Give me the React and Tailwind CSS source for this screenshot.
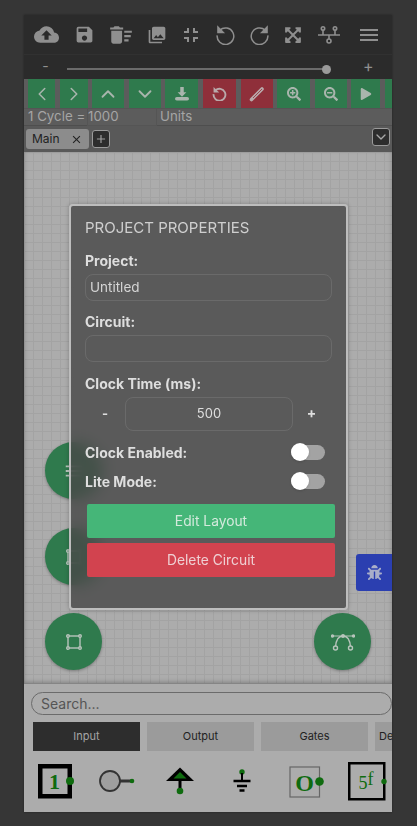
import React from "react";
import { MdCloudUpload, MdSave, MdDeleteSweep, MdPhotoLibrary, MdFullscreenExit, MdMenu, MdClose, MdAdd } from "react-icons/md";
import { FaSearchPlus, FaSearchMinus, FaPlay, FaBug, FaExpandArrowsAlt } from "react-icons/fa";
import { ChevronLeft, ChevronRight, ChevronUp, ChevronDown } from "lucide-react";

const font = { fontFamily: "Inter, 'Liberation Sans', sans-serif" };

function Undo({ flip, size = 21, strokeWidth = 1.700 }) {
  return (
    <svg width={size} height={size} viewBox="0 0 24 24" fill="none" stroke="currentColor" strokeWidth={strokeWidth} className={flip ? "-scale-x-100" : ""}>
      <path d="M5.500 7A9.500 9.500 0 1 1 2.500 13" />
      <path d="M2.500 1.500V10.500H11.500z" fill="currentColor" stroke="none" />
    </svg>
  );
}

function Network() {
  return (
    <svg width="22" height="18" viewBox="0 0 22 18" fill="none" stroke="#8f8f8f" strokeWidth="1.600">
      <path d="M0 9h22M5 3.500V9M17 3.500V9M11 9v4" />
      <circle cx="5" cy="2.500" r="1.700" />
      <circle cx="17" cy="2.500" r="1.700" />
      <circle cx="11" cy="15" r="2" />
    </svg>
  );
}

function Tray() {
  return (
    <svg width="14" height="14" viewBox="0 0 16 16" fill="#a9b5ad">
      <path d="M6 0h4v6h3l-5 5-5-5h3z" />
      <rect x="0" y="11.500" width="16" height="4" rx="2" />
    </svg>
  );
}

function Pencil() {
  return (
    <svg width="16" height="16" viewBox="0 0 16 16" fill="none">
      <path d="M2.500 13.500L13 3" stroke="#b9a9ab" strokeWidth="3.600" strokeLinecap="round" />
      <path d="M4 12L13 3" stroke="#8f2f3a" strokeWidth="0.800" />
    </svg>
  );
}

function Poly() {
  return (
    <svg width="16" height="16" viewBox="0 0 16 16" fill="none" stroke="#b8c4bc" strokeWidth="1.400">
      <rect x="2" y="2" width="12" height="12" />
      <circle cx="2" cy="2" r="1.300" fill="#2f7a4d" />
      <circle cx="14" cy="2" r="1.300" fill="#2f7a4d" />
      <circle cx="2" cy="14" r="1.300" fill="#2f7a4d" />
      <circle cx="14" cy="14" r="1.300" fill="#2f7a4d" />
    </svg>
  );
}

function Bezier() {
  return (
    <svg width="24" height="18" viewBox="0 0 24 18" fill="none" stroke="#b8c4bc" strokeWidth="1.400">
      <path d="M1.500 3H22.500" strokeWidth="1" />
      <path d="M4.500 14C5 7 8 3 12 3s7 4 7.500 11" />
      <circle cx="4.500" cy="15" r="2" fill="#2f7a4d" />
      <circle cx="19.500" cy="15" r="2" fill="#2f7a4d" />
      <circle cx="12" cy="3" r="1.300" fill="#b8c4bc" />
      <circle cx="1.500" cy="3" r="1" fill="#b8c4bc" />
      <circle cx="22.500" cy="3" r="1" fill="#b8c4bc" />
    </svg>
  );
}

function Fab({ className, children }) {
  return (
    <div className={"absolute w-[57px] h-[57px] rounded-full bg-[#2f7a4d] flex items-center justify-center text-[#b8c4bc] shadow-[0_1px_3px_rgba(0,0,0,0.3)] " + className}>
      {children}
    </div>
  );
}

function ActionBtn({ w, red, children }) {
  return (
    <div className={"h-[29px] shrink-0 flex items-center justify-center text-[#a9b5ad] " + w + " " + (red ? "bg-[#8f2f3a] text-[#b9a9ab]" : "bg-[#2f7a4d]")}>
      {children}
    </div>
  );
}

function Toggle() {
  return (
    <div className="relative w-[34px] h-[15px] rounded-full bg-[#a3a3a3]">
      <div className="absolute left-0 top-[-2px] w-[18px] h-[18px] rounded-full bg-white shadow-sm" />
    </div>
  );
}

function Field({ value }) {
  return (
    <div className="h-[27px] rounded-[8px] border border-[#6a6a6a] px-[4px] flex items-center text-[13.500px] text-[#d5d5d5]">
      {value}
    </div>
  );
}

function Tab({ active, children }) {
  return (
    <div className={"w-[107px] h-[29px] shrink-0 flex items-center justify-center text-[11px] " + (active ? "bg-[#2d2d2d] text-[#a5a5a5]" : "bg-[#9b9b9b] text-[#222222]")}>
      {children}
    </div>
  );
}

function Component1() {
  return (
    <svg width="37" height="35" viewBox="0 0 37 35">
      <rect x="2.250" y="2.250" width="29.500" height="30" fill="none" stroke="#000" strokeWidth="4.500" />
      <text x="16.500" y="25" textAnchor="middle" fontSize="22" fontWeight="700" fill="#0f6b0f" fontFamily="'Liberation Serif', serif">1</text>
      <circle cx="32" cy="17" r="4" fill="#0f6b0f" />
    </svg>
  );
}

function ComponentButton() {
  return (
    <svg width="36" height="24" viewBox="0 0 36 24">
      <path d="M20 12h14" stroke="#333" strokeWidth="3" />
      <circle cx="11" cy="12" r="10" fill="#9f9f9f" stroke="#333" strokeWidth="1.800" />
      <circle cx="33" cy="12" r="2.300" fill="#0f6b0f" />
    </svg>
  );
}

function ComponentPower() {
  return (
    <svg width="30" height="30" viewBox="0 0 30 30">
      <path d="M15 1.500L29 15H1z" fill="#000" />
      <path d="M15 6L21.500 12.500h-13z" fill="#0f6b0f" />
      <path d="M15 14v10" stroke="#000" strokeWidth="3" />
      <circle cx="15" cy="25" r="3.300" fill="#0f6b0f" />
    </svg>
  );
}

function ComponentGround() {
  return (
    <svg width="20" height="24" viewBox="0 0 20 24">
      <circle cx="10" cy="3" r="2.700" fill="#0f6b0f" />
      <path d="M10 4v7" stroke="#000" strokeWidth="2" />
      <path d="M1.500 12H18.500M5 17H15M7.500 21.500H12.500" stroke="#000" strokeWidth="2.400" />
    </svg>
  );
}

function ComponentOutput() {
  return (
    <svg width="36" height="32" viewBox="0 0 36 32">
      <rect x="1" y="1" width="29.500" height="30" fill="none" stroke="#666" strokeWidth="1.200" />
      <text x="15.500" y="25" textAnchor="middle" fontSize="24" fontWeight="700" fill="#0f6b0f" fontFamily="'Liberation Serif', serif">O</text>
      <circle cx="30.500" cy="15.500" r="4.300" fill="#0f6b0f" />
    </svg>
  );
}

function Component5f() {
  return (
    <svg width="40" height="39" viewBox="0 0 40 39">
      <rect x="1.250" y="1.250" width="35" height="36" fill="none" stroke="#000" strokeWidth="2.500" />
      <text x="18" y="27" textAnchor="middle" fontSize="18" fill="#0f6b0f" fontFamily="'Liberation Serif', serif">5<tspan dy="-4">f</tspan></text>
      <circle cx="36" cy="19.500" r="2.700" fill="#0f6b0f" />
    </svg>
  );
}

export default function App() {
  return (
    <div className="w-[417px] h-[826px] bg-[#363636] pt-[15px] pl-[24px] overflow-hidden" style={font}>
      <div className="w-[368px] h-[797px] flex flex-col overflow-hidden bg-[#acacac] shadow-[0_0_2px_rgba(0,0,0,0.4)]">
        <div className="h-[40px] shrink-0 bg-[#2b2b2b] text-[#8f8f8f] flex items-center border-b border-[#313131]">
          <div className="w-[44px] flex justify-center"><MdCloudUpload size={25} /></div>
          <div className="w-[32px] flex justify-center"><MdSave size={21} /></div>
          <div className="w-[42px] flex justify-center"><MdDeleteSweep size={26} /></div>
          <div className="w-[30px] flex justify-center"><MdPhotoLibrary size={20} /></div>
          <div className="w-[38px] flex justify-center"><MdFullscreenExit size={24} /></div>
          <div className="w-[30px] flex justify-center"><Undo /></div>
          <div className="w-[38px] flex justify-center"><Undo flip /></div>
          <div className="w-[30px] flex justify-center"><FaExpandArrowsAlt size={18} /></div>
          <div className="w-[42px] flex justify-center"><Network /></div>
          <div className="w-[38px] flex justify-center"><MdMenu size={24} /></div>
        </div>
        <div className="h-[24px] shrink-0 bg-[#2b2b2b] flex items-center text-[#909090]">
          <span className="w-[43px] text-center text-[14px] leading-none pb-[3px]">-</span>
          <div className="w-[260px] h-[2px] mt-[4px] bg-[#6b6b6b] relative">
            <div className="absolute right-[-4px] top-[-3.500px] w-[9px] h-[9px] rounded-full bg-[#9a9a9a]" />
          </div>
          <span className="ml-[36px] text-[16px] leading-none pb-[3px]">+</span>
        </div>
        <div className="h-[30px] shrink-0 bg-[#5c5c5c] flex items-center pl-[4px] gap-[4.600px] overflow-hidden border-b border-[#555555]">
          <ActionBtn w="w-[27px]"><ChevronLeft size={22} strokeWidth={1.700} /></ActionBtn>
          <ActionBtn w="w-[28px]"><ChevronRight size={22} strokeWidth={1.700} /></ActionBtn>
          <ActionBtn w="w-[32px]"><ChevronUp size={22} strokeWidth={2} /></ActionBtn>
          <ActionBtn w="w-[32px]"><ChevronDown size={22} strokeWidth={2} /></ActionBtn>
          <ActionBtn w="w-[33px]"><Tray /></ActionBtn>
          <ActionBtn w="w-[33px]" red><Undo size={15} strokeWidth={3} /></ActionBtn>
          <ActionBtn w="w-[32px]" red><Pencil /></ActionBtn>
          <ActionBtn w="w-[33px]"><FaSearchPlus size={14} /></ActionBtn>
          <ActionBtn w="w-[32px]"><FaSearchMinus size={14} /></ActionBtn>
          <ActionBtn w="w-[29px]"><FaPlay size={12} /></ActionBtn>
          <ActionBtn w="w-[29px]" />
        </div>
        <div className="h-[17px] shrink-0 bg-[#5c5c5c] flex items-center pl-[4px] text-[13.300px] text-[#a5a5a5] border-b border-[#4e4e4e]">
          <span className="w-[59px] shrink-0">1 Cycle =</span>
          <span className="w-[70px] h-[18px] shrink-0 border border-[#555555] flex items-center">1000</span>
          <span className="ml-[3px]">Units</span>
        </div>
        <div className="h-[26px] shrink-0 bg-[#595959] relative flex items-center pl-[2px] gap-[3px]">
          <div className="w-[63px] h-[20px] rounded-[3px] bg-[#8c8c8c] flex items-center justify-between px-[6px] text-[12px] text-[#222222]">
            <span>Main</span>
            <MdClose size={13} />
          </div>
          <div className="w-[18px] h-[18px] rounded-[3px] bg-[#2d2d2d] border border-[#9a9a9a] flex items-center justify-center text-[#a0a0a0]"><MdAdd size={14} /></div>
          <div className="absolute right-[2px] top-[2px] w-[18px] h-[18px] rounded-[3px] bg-[#2d2d2d] border border-[#9a9a9a] flex items-center justify-center text-[#a8a8a8]"><ChevronDown size={16} strokeWidth={2} /></div>
        </div>

        <div className="relative flex-1 bg-[#acacac] bg-[linear-gradient(#a3a3a3_1px,transparent_1px),linear-gradient(90deg,#a3a3a3_1px,transparent_1px)] bg-[size:9px_9px] shadow-[inset_0_-2px_4px_rgba(0,0,0,0.25)]">
          <Fab className="left-[21px] top-[290px]"><MdMenu size={22} /></Fab>
          <Fab className="left-[21px] top-[376px]"><Poly /></Fab>
          <Fab className="left-[21px] top-[461px]"><Poly /></Fab>
          <Fab className="left-[290px] top-[461px]"><Bezier /></Fab>
          <div className="absolute right-0 top-[402px] w-[36px] h-[37px] rounded-l-[3px] bg-[#2b3fb0] flex items-center justify-center text-[#a9aec9]"><FaBug size={15} /></div>

          <div className="absolute left-[45px] top-[52px] w-[279px] h-[406px] rounded-[4px] border-2 border-[#bdbdbd] bg-[rgba(70,70,70,0.8)] backdrop-blur-sm text-[#dedede] px-[14px] pt-[13px] shadow-[0_0_4px_rgba(0,0,0,0.25)]">
            <div className="text-[15px] leading-[18px] text-[#cfcfcf]">PROJECT PROPERTIES</div>
            <div className="mt-[16px] text-[14px] font-bold leading-[16px]">Project:</div>
            <div className="mt-[5px]"><Field value="Untitled" /></div>
            <div className="mt-[13px] text-[14px] font-bold leading-[16px]">Circuit:</div>
            <div className="mt-[5px]"><Field value="" /></div>
            <div className="mt-[14px] text-[14px] font-bold leading-[16px]">Clock Time (ms):</div>
            <div className="mt-[5px] flex items-center">
              <span className="w-[40px] text-center text-[13px] font-bold">-</span>
              <div className="w-[168px] h-[34px] rounded-[8px] border border-[#6a6a6a] flex items-center justify-center text-[13px]">500</div>
              <span className="w-[38px] pr-[1px] text-center text-[14px] font-bold pb-[4px]">+</span>
            </div>
            <div className="mt-[11px] flex items-center justify-between pr-[7px] h-[20px] text-[14px] font-bold">
              <span>Clock Enabled:</span>
              <Toggle />
            </div>
            <div className="mt-[9px] flex items-center justify-between pr-[7px] h-[20px] text-[14px] font-bold">
              <span>Lite Mode:</span>
              <Toggle />
            </div>
            <div className="mt-[13px] ml-[2px] w-[248px] h-[34px] rounded-[2px] bg-[#45b678] flex items-center justify-center text-[13.800px] text-[#d4eadd]">Edit Layout</div>
            <div className="mt-[5px] ml-[2px] w-[248px] h-[34px] rounded-[2px] bg-[#d2434f] flex items-center justify-center text-[13.800px] text-[#efd0d3]">Delete Circuit</div>
          </div>
        </div>

        <div className="h-[128px] shrink-0 bg-[#acacac] overflow-hidden">
          <div className="ml-[7px] mt-[8px] h-[23px] w-[361px] rounded-full border border-[#6b6b6b] flex items-center px-[9px] text-[14px] text-[#555555]">Search...</div>
          <div className="ml-[9px] mt-[7px] flex gap-[7px] w-[359px] overflow-hidden">
            <Tab active>Input</Tab>
            <Tab>Output</Tab>
            <Tab>Gates</Tab>
            <Tab><span className="w-full pl-[4px]">De</span></Tab>
          </div>
          <div className="relative h-[50px]">
            <div className="absolute left-[14px] top-[13px]"><Component1 /></div>
            <div className="absolute left-[75px] top-[18px]"><ComponentButton /></div>
            <div className="absolute left-[141px] top-[15px]"><ComponentPower /></div>
            <div className="absolute left-[208px] top-[18px]"><ComponentGround /></div>
            <div className="absolute left-[265px] top-[15px]"><ComponentOutput /></div>
            <div className="absolute left-[324px] top-[11px]"><Component5f /></div>
          </div>
        </div>
      </div>
    </div>
  );
}
